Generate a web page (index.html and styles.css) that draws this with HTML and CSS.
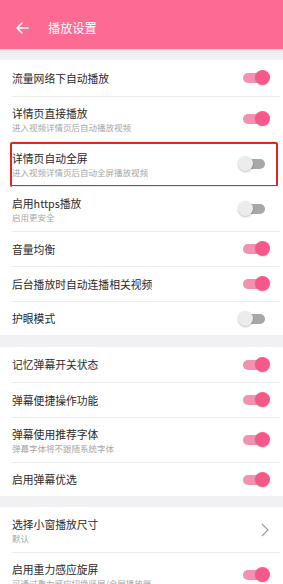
FILE: index.html
```html
<!DOCTYPE html>
<html lang="zh-CN">
<head>
<meta charset="utf-8">
<title>播放设置</title>
<link rel="stylesheet" href="styles.css">
</head>
<body>
<header class="topbar">
  <svg class="back" width="14" height="14" viewBox="0 0 14 14"><path d="M13 7H2M7 2L2 7l5 5" fill="none" stroke="#fff" stroke-width="1.6" stroke-linecap="round" stroke-linejoin="round"/></svg>
  <span class="title">播放设置</span>
</header>
<div class="gap g1"></div>
<section class="group">
  <div class="row single first"><div class="txt"><div class="t">流量网络下自动播放</div></div><span class="sw on"><i></i></span></div>
  <div class="row double"><div class="txt"><div class="t">详情页直接播放</div><div class="s">进入视频详情页后自动播放视频</div></div><span class="sw on"><i></i></span></div>
  <div class="row double marked"><div class="txt"><div class="t">详情页自动全屏</div><div class="s">进入视频详情页后自动全屏播放视频</div></div><span class="sw"><i></i></span></div>
  <div class="row double"><div class="txt"><div class="t">启用https播放</div><div class="s">启用更安全</div></div><span class="sw"><i></i></span></div>
  <div class="row single"><div class="txt"><div class="t">音量均衡</div></div><span class="sw on"><i></i></span></div>
  <div class="row single"><div class="txt"><div class="t">后台播放时自动连播相关视频</div></div><span class="sw on"><i></i></span></div>
  <div class="row single last"><div class="txt"><div class="t">护眼模式</div></div><span class="sw"><i></i></span></div>
</section>
<div class="gap g2"></div>
<section class="group">
  <div class="row single first2"><div class="txt"><div class="t">记忆弹幕开关状态</div></div><span class="sw on"><i></i></span></div>
  <div class="row single"><div class="txt"><div class="t">弹幕便捷操作功能</div></div><span class="sw on"><i></i></span></div>
  <div class="row double"><div class="txt"><div class="t">弹幕使用推荐字体</div><div class="s">弹幕字体将不跟随系统字体</div></div><span class="sw on"><i></i></span></div>
  <div class="row single last"><div class="txt"><div class="t">启用弹幕优选</div></div><span class="sw on"><i></i></span></div>
</section>
<div class="gap g3"></div>
<section class="group">
  <div class="row double first3"><div class="txt"><div class="t">选择小窗播放尺寸</div><div class="s">默认</div></div><svg class="chev" width="8" height="14" viewBox="0 0 8 14"><path d="M1 1l6 6-6 6" fill="none" stroke="#9a9a9a" stroke-width="1.1"/></svg></div>
  <div class="row double"><div class="txt"><div class="t">启用重力感应旋屏</div><div class="s">可通过重力感应切换竖屏/全屏播放器</div></div><span class="sw on"><i></i></span></div>
</section>
</body>
</html>
```

FILE: styles.css
```css
html, body {
  margin: 0;
  padding: 0;
}
body {
  width: 283px;
  height: 584px;
  overflow: hidden;
  background: #f1f1f3;
  font-family: "Noto Sans CJK SC", "Noto Sans", sans-serif;
}
.topbar {
  height: 49px;
  background: #fd6a92;
  display: flex;
  align-items: center;
  padding: 6px 0 0 15px;
  box-sizing: border-box;
  box-shadow: 0 1px 3px rgba(0,0,0,0.08);
  position: relative;
}
.back {
  display: block;
}
.title {
  margin-left: 19px;
  color: #fff;
  font-size: 12.2px;
  line-height: 16px;
}
.gap.g1 { height: 11px; background: linear-gradient(#ececee, #f3f3f5); }
.gap.g2 { height: 12px; }
.gap.g3 { height: 11px; }
.group {
  background: #fff;
}
.row {
  display: flex;
  align-items: center;
  justify-content: space-between;
  margin-left: 12px;
  margin-right: 3px;
  border-top: 1px solid #ebebeb;
  position: relative;
}
.row.first, .row.first2, .row.first3 { border-top: none; }
.row.single { height: 34px; }
.row.first { height: 36px; }
.row.first2 { height: 35px; }
.row.last { height: 33px; }
.row.double { height: 44px; }
.row.first3 { height: 45px; }
.txt {
  display: flex;
  flex-direction: column;
}
.t {
  font-size: 10.8px;
  line-height: 15px;
  color: #2a2a2a;
}
.s {
  font-size: 8.5px;
  line-height: 12px;
  color: #a6a6a6;
}
.row.double .txt { padding-top: 1px; }
.marked::after {
  content: "";
  position: absolute;
  left: -2px;
  right: 2px;
  top: 0;
  bottom: -1px;
  border: 2px solid #e5231f;
  border-radius: 2px;
}
.sw {
  position: relative;
  width: 32px;
  height: 16px;
  margin-right: 10px;
  flex: none;
}
.sw::before {
  content: "";
  position: absolute;
  left: 5px;
  top: 3px;
  width: 22px;
  height: 10px;
  border-radius: 5px;
  background: #a8a8a8;
}
.sw i {
  position: absolute;
  left: 0;
  top: 0;
  width: 15px;
  height: 15px;
  border-radius: 50%;
  background: #ececec;
  box-shadow: 0 1px 2px rgba(0,0,0,0.25);
}
.sw.on::before { background: #f590ae; }
.sw.on i {
  left: 17px;
  background: #f5598a;
  box-shadow: 0 1px 1.5px rgba(0,0,0,0.12);
}
.chev {
  display: block;
  margin-right: 11px;
}
```
